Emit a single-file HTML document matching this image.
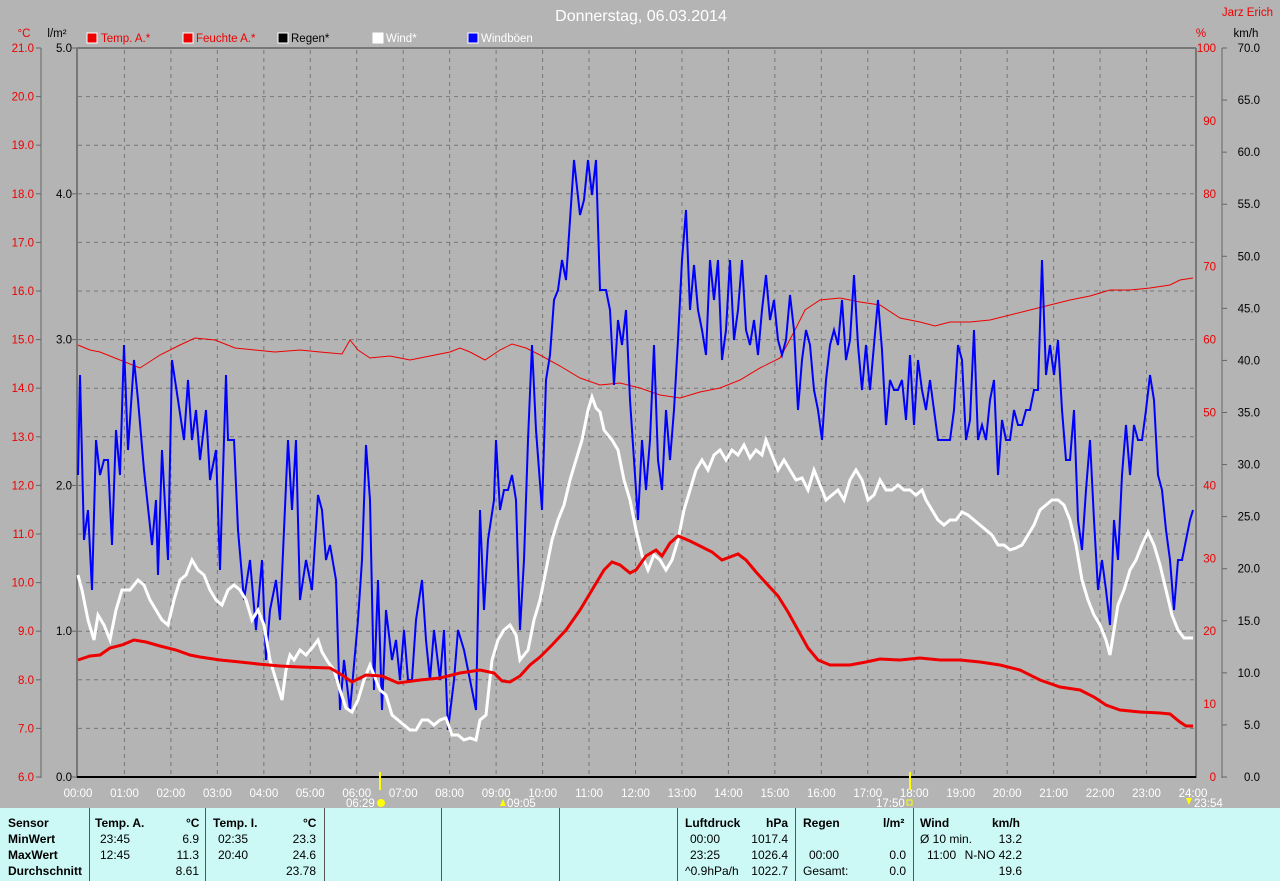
<!DOCTYPE html>
<html><head><meta charset="utf-8"><style>
body{margin:0;width:1280px;height:881px;background:#b4b4b4;overflow:hidden;font-family:"Liberation Sans",sans-serif}
svg{position:absolute;left:0;top:0}
#tbl{position:absolute;left:0;top:808px;width:1280px;height:73px;background:#ccf8f6;font-size:12px;color:#000}
.c{position:absolute;top:0;height:73px;border-left:1px solid #555}
.t{position:absolute;white-space:nowrap}
.b{font-weight:bold}
</style></head><body>
<svg width="1280" height="808" font-family="Liberation Sans, sans-serif" font-size="11.5">
<text x="641" y="21" fill="#fff" font-size="16" text-anchor="middle">Donnerstag, 06.03.2014</text>
<text x="1273" y="16" fill="#e00" text-anchor="end">Jarz Erich</text>
<text x="24" y="37" fill="#e00" text-anchor="middle">°C</text>
<text x="57" y="37" fill="#000" text-anchor="middle">l/m²</text>
<text x="1201" y="37" fill="#e00" text-anchor="middle">%</text>
<text x="1246" y="37" fill="#000" text-anchor="middle">km/h</text>
<g>
<rect x="87" y="33" width="10" height="10" fill="#e00" stroke="#fff"/><text x="101" y="42" fill="#e00">Temp. A.*</text>
<rect x="183" y="33" width="10" height="10" fill="#e00" stroke="#fff"/><text x="196" y="42" fill="#e00">Feuchte A.*</text>
<rect x="278" y="33" width="10" height="10" fill="#000" stroke="#fff"/><text x="291" y="42" fill="#000">Regen*</text>
<rect x="373" y="33" width="10" height="10" fill="#fff" stroke="#fff"/><text x="386" y="42" fill="#fff">Wind*</text>
<rect x="468" y="33" width="10" height="10" fill="#00f" stroke="#fff"/><text x="481" y="42" fill="#fff">Windböen</text>
</g>
<line x1="77" y1="48" x2="1196" y2="48" stroke="#777" stroke-width="2"/>
<line x1="77" y1="48" x2="77" y2="778" stroke="#777" stroke-width="2"/>
<line x1="1196" y1="48" x2="1196" y2="778" stroke="#777" stroke-width="2"/>
<line x1="41" y1="48" x2="41" y2="778" stroke="#666"/>
<line x1="1222" y1="48" x2="1222" y2="778" stroke="#666"/>
<g stroke="#777" stroke-dasharray="4,4" id="grid"></g>
<line x1="77" y1="777" x2="1196" y2="777" stroke="#000" stroke-width="2"/>
<g id="labels"></g>
<polyline fill="none" stroke="#e00" stroke-width="1" points="78,345 90,350 100,352 120,360 140,368 160,355 180,345 195,338 215,340 235,348 255,350 275,352 300,350 320,352 342,354 350,340 358,350 370,358 390,356 410,360 430,356 450,352 460,348 470,352 485,360 500,350 512,344 526,348 540,355 560,366 580,378 600,385 620,383 640,388 660,395 680,398 700,392 720,388 740,380 760,368 780,358 795,330 805,310 820,300 840,298 860,302 880,305 900,318 920,322 935,326 950,322 970,322 990,320 1010,315 1030,310 1050,305 1070,300 1090,296 1110,290 1130,290 1150,288 1170,285 1180,280 1193,278"/>
<polyline fill="none" stroke="#00f" stroke-width="2" points="78,475 80,375 84,540 88,510 92,590 96,440 100,475 104,460 108,460 112,545 116,430 120,475 124,345 128,450 134,360 138,400 144,470 152,545 156,500 158,575 162,450 168,560 172,360 178,400 184,440 188,380 192,440 196,410 200,460 206,410 210,480 216,450 220,570 226,375 228,440 234,440 238,530 244,600 250,560 256,630 262,560 266,660 270,610 276,580 280,620 288,440 292,510 296,440 300,600 306,560 312,590 318,495 322,510 326,560 330,545 336,580 340,710 344,660 350,710 358,620 362,560 366,445 370,500 374,690 378,580 382,710 386,610 392,660 396,640 400,680 404,630 408,680 412,680 416,620 422,580 426,640 430,680 434,630 440,680 444,630 448,730 454,680 458,630 464,650 470,680 476,710 480,510 484,610 488,540 494,500 496,440 500,510 504,490 508,490 512,475 516,500 520,630 524,560 528,440 532,345 536,430 542,510 546,380 550,355 554,300 558,290 562,260 566,280 570,220 574,160 580,215 584,200 588,160 592,195 596,160 600,290 606,290 610,310 614,385 618,320 622,345 626,310 630,400 634,460 638,520 642,440 646,490 650,440 654,345 658,460 662,490 666,410 670,460 674,410 678,340 682,260 686,210 690,310 694,265 698,310 702,330 706,355 710,260 714,300 718,260 722,360 726,330 730,260 734,340 738,310 742,260 746,330 750,345 754,320 758,355 762,310 766,275 770,320 774,300 778,340 782,355 786,340 790,295 794,330 798,410 802,360 806,330 810,345 814,390 818,410 822,440 826,380 830,345 834,330 838,345 842,300 846,360 850,340 854,275 858,345 862,390 866,345 870,390 874,345 878,300 882,350 886,425 890,380 894,390 898,390 902,380 906,420 910,355 914,425 918,360 922,390 926,410 930,380 934,410 938,440 942,440 946,440 950,440 954,410 958,345 962,360 966,440 970,420 974,330 978,440 982,425 986,440 990,400 994,380 998,475 1002,420 1006,440 1010,440 1014,410 1018,425 1022,425 1026,410 1030,410 1034,390 1038,390 1042,260 1046,375 1050,345 1054,375 1058,340 1062,410 1066,460 1070,460 1074,410 1078,520 1082,550 1086,490 1090,440 1094,520 1098,590 1102,560 1106,590 1110,625 1114,520 1118,560 1122,475 1126,425 1130,475 1134,425 1138,440 1142,440 1146,410 1150,375 1154,400 1158,475 1162,490 1166,530 1170,560 1174,610 1178,560 1182,560 1186,540 1190,520 1193,510"/>
<polyline fill="none" stroke="#fff" stroke-width="3" points="78,575 82,590 88,620 94,640 98,615 104,625 110,640 116,610 122,590 130,590 138,580 144,585 150,600 156,610 162,620 168,625 174,600 180,580 186,575 192,560 198,570 204,575 210,590 216,600 222,605 228,590 234,585 240,590 246,600 252,620 258,610 264,625 270,660 276,680 282,700 286,670 290,655 294,660 300,650 306,655 312,648 318,640 322,652 328,662 334,670 340,690 346,708 352,712 358,700 364,680 370,665 374,675 380,690 386,695 392,715 398,720 404,725 410,730 416,730 422,720 428,720 434,725 440,720 446,718 452,735 458,735 464,740 470,738 476,740 480,720 486,715 492,660 498,640 504,630 510,625 516,635 520,660 524,655 528,650 534,620 540,600 546,570 552,540 558,520 564,505 570,480 576,460 582,440 588,410 592,397 596,408 600,412 604,430 608,435 612,440 618,450 624,480 630,500 636,530 642,555 648,570 654,555 660,560 666,570 672,560 678,540 684,510 690,490 696,470 702,460 708,470 714,455 720,450 726,460 732,450 738,455 744,445 750,458 756,450 762,455 766,440 770,450 774,460 778,470 784,460 790,470 796,480 802,478 808,490 814,470 820,485 826,500 832,495 838,490 844,500 850,480 856,470 862,480 868,500 874,495 880,480 886,490 892,490 898,485 904,490 910,490 916,495 922,490 926,500 932,510 938,520 944,525 950,520 956,520 962,512 968,515 974,520 980,525 986,530 992,535 998,545 1004,545 1010,550 1016,548 1022,545 1028,535 1034,525 1040,510 1046,505 1052,500 1058,500 1064,505 1070,520 1076,545 1082,580 1088,600 1094,615 1100,625 1106,640 1110,655 1114,630 1118,605 1124,590 1130,570 1136,560 1142,545 1148,532 1154,545 1160,565 1166,590 1172,615 1178,630 1184,638 1193,638"/>
<polyline fill="none" stroke="#e00" stroke-width="3" points="78,660 90,656 100,655 110,648 122,645 134,640 146,642 160,646 176,650 190,655 200,657 220,660 240,662 258,664 280,666 300,667 330,668 342,675 352,682 366,675 382,676 398,683 420,680 440,678 460,673 480,670 494,673 502,681 510,682 520,676 530,665 540,657 552,645 566,630 580,610 592,590 604,570 612,562 620,565 630,573 636,570 646,556 656,550 662,556 670,543 678,536 690,541 700,546 712,552 722,560 730,557 738,554 746,560 756,572 766,583 778,596 788,612 798,630 808,648 818,660 830,665 850,665 866,662 880,659 900,660 920,658 940,660 960,660 980,662 1000,665 1020,670 1040,680 1060,687 1080,690 1094,697 1106,705 1120,710 1140,712 1160,713 1170,714 1180,722 1186,726 1193,726"/>
<line x1="380" y1="772" x2="380" y2="790" stroke="#ff0" stroke-width="2"/>
<line x1="910" y1="772" x2="910" y2="790" stroke="#ff0" stroke-width="2"/>
<circle cx="381" cy="803" r="4" fill="#ff0"/>
<rect x="907" y="800" width="5" height="5" fill="none" stroke="#ff0"/>
<polygon points="500,806 503,799 506,806" fill="#ff0"/>
<polygon points="1186,798 1192,798 1189,805" fill="#ff0"/>
<text x="346" y="807" fill="#fff">06:29</text>
<text x="507" y="807" fill="#fff">09:05</text>
<text x="876" y="807" fill="#fff">17:50</text>
<text x="1194" y="807" fill="#fff">23:54</text>
</svg>
<div id="tbl">
<div class="c" style="left:89px"></div><div class="c" style="left:205px"></div><div class="c" style="left:324px"></div><div class="c" style="left:441px"></div><div class="c" style="left:559px"></div><div class="c" style="left:677px"></div><div class="c" style="left:795px"></div><div class="c" style="left:913px"></div>
<div class="t b" style="left:8px;top:8px">Sensor</div><div class="t b" style="left:8px;top:24px">MinWert</div><div class="t b" style="left:8px;top:40px">MaxWert</div><div class="t b" style="left:8px;top:56px">Durchschnitt</div>
<div class="t b" style="left:95px;top:8px">Temp. A.</div><div class="t b" style="left:186px;top:8px">°C</div>
<div class="t" style="left:100px;top:24px">23:45</div><div class="t" style="right:1081px;top:24px">6.9</div>
<div class="t" style="left:100px;top:40px">12:45</div><div class="t" style="right:1081px;top:40px">11.3</div>
<div class="t" style="right:1081px;top:56px">8.61</div>
<div class="t b" style="left:213px;top:8px">Temp. I.</div><div class="t b" style="left:303px;top:8px">°C</div>
<div class="t" style="left:218px;top:24px">02:35</div><div class="t" style="right:964px;top:24px">23.3</div>
<div class="t" style="left:218px;top:40px">20:40</div><div class="t" style="right:964px;top:40px">24.6</div>
<div class="t" style="right:964px;top:56px">23.78</div>
<div class="t b" style="left:685px;top:8px">Luftdruck</div><div class="t b" style="left:766px;top:8px">hPa</div>
<div class="t" style="left:690px;top:24px">00:00</div><div class="t" style="right:492px;top:24px">1017.4</div>
<div class="t" style="left:690px;top:40px">23:25</div><div class="t" style="right:492px;top:40px">1026.4</div>
<div class="t" style="left:685px;top:56px">^0.9hPa/h</div><div class="t" style="right:492px;top:56px">1022.7</div>
<div class="t b" style="left:803px;top:8px">Regen</div><div class="t b" style="left:883px;top:8px">l/m²</div>
<div class="t" style="left:809px;top:40px">00:00</div><div class="t" style="right:374px;top:40px">0.0</div>
<div class="t" style="left:803px;top:56px">Gesamt:</div><div class="t" style="right:374px;top:56px">0.0</div>
<div class="t b" style="left:920px;top:8px">Wind</div><div class="t b" style="left:992px;top:8px">km/h</div>
<div class="t" style="left:920px;top:24px">Ø 10 min.</div><div class="t" style="right:258px;top:24px">13.2</div>
<div class="t" style="left:927px;top:40px">11:00</div><div class="t" style="right:258px;top:40px">N-NO 42.2</div>
<div class="t" style="right:258px;top:56px">19.6</div>
</div>
<script>
var ns="http://www.w3.org/2000/svg",g=document.getElementById("grid"),L=document.getElementById("labels");
function ln(p,x1,y1,x2,y2,s){var l=document.createElementNS(ns,"line");l.setAttribute("x1",x1);l.setAttribute("y1",y1);l.setAttribute("x2",x2);l.setAttribute("y2",y2);if(s)l.setAttribute("stroke",s);p.appendChild(l);}
function tx(x,y,t,f,a){var e=document.createElementNS(ns,"text");e.setAttribute("x",x);e.setAttribute("y",y);e.setAttribute("fill",f);e.setAttribute("text-anchor",a||"end");e.textContent=t;L.appendChild(e);}
var x0=78,dx=(1193-78)/24;
for(var h=1;h<24;h++)ln(g,x0+h*dx,50,x0+h*dx,776);
for(var h=0;h<=24;h++)tx(x0+h*dx,797,(h<10?"0":"")+h+":00","#fff","middle");
var dy=(777-48)/15;
for(var i=0;i<=15;i++){var y=48+i*dy;if(i>0&&i<15)ln(g,78,y,1195,y);tx(34,y+4,(21-i).toFixed(1),"#e00");ln(L,36,y,41,y,"#666");}
for(var i=0;i<=5;i++){var y=48+i*3*dy;tx(72,y+4,(5-i).toFixed(1),"#000");ln(L,72,y,77,y,"#666");}
for(var i=0;i<=10;i++){var y=48+i*72.9;tx(1216,y+4,String(100-i*10),"#e00");}
for(var i=0;i<=14;i++){var y=48+i*(729/14);tx(1260,y+4,(70-i*5).toFixed(1),"#000");ln(L,1222,y,1227,y,"#666");}
</script>
</body></html>
